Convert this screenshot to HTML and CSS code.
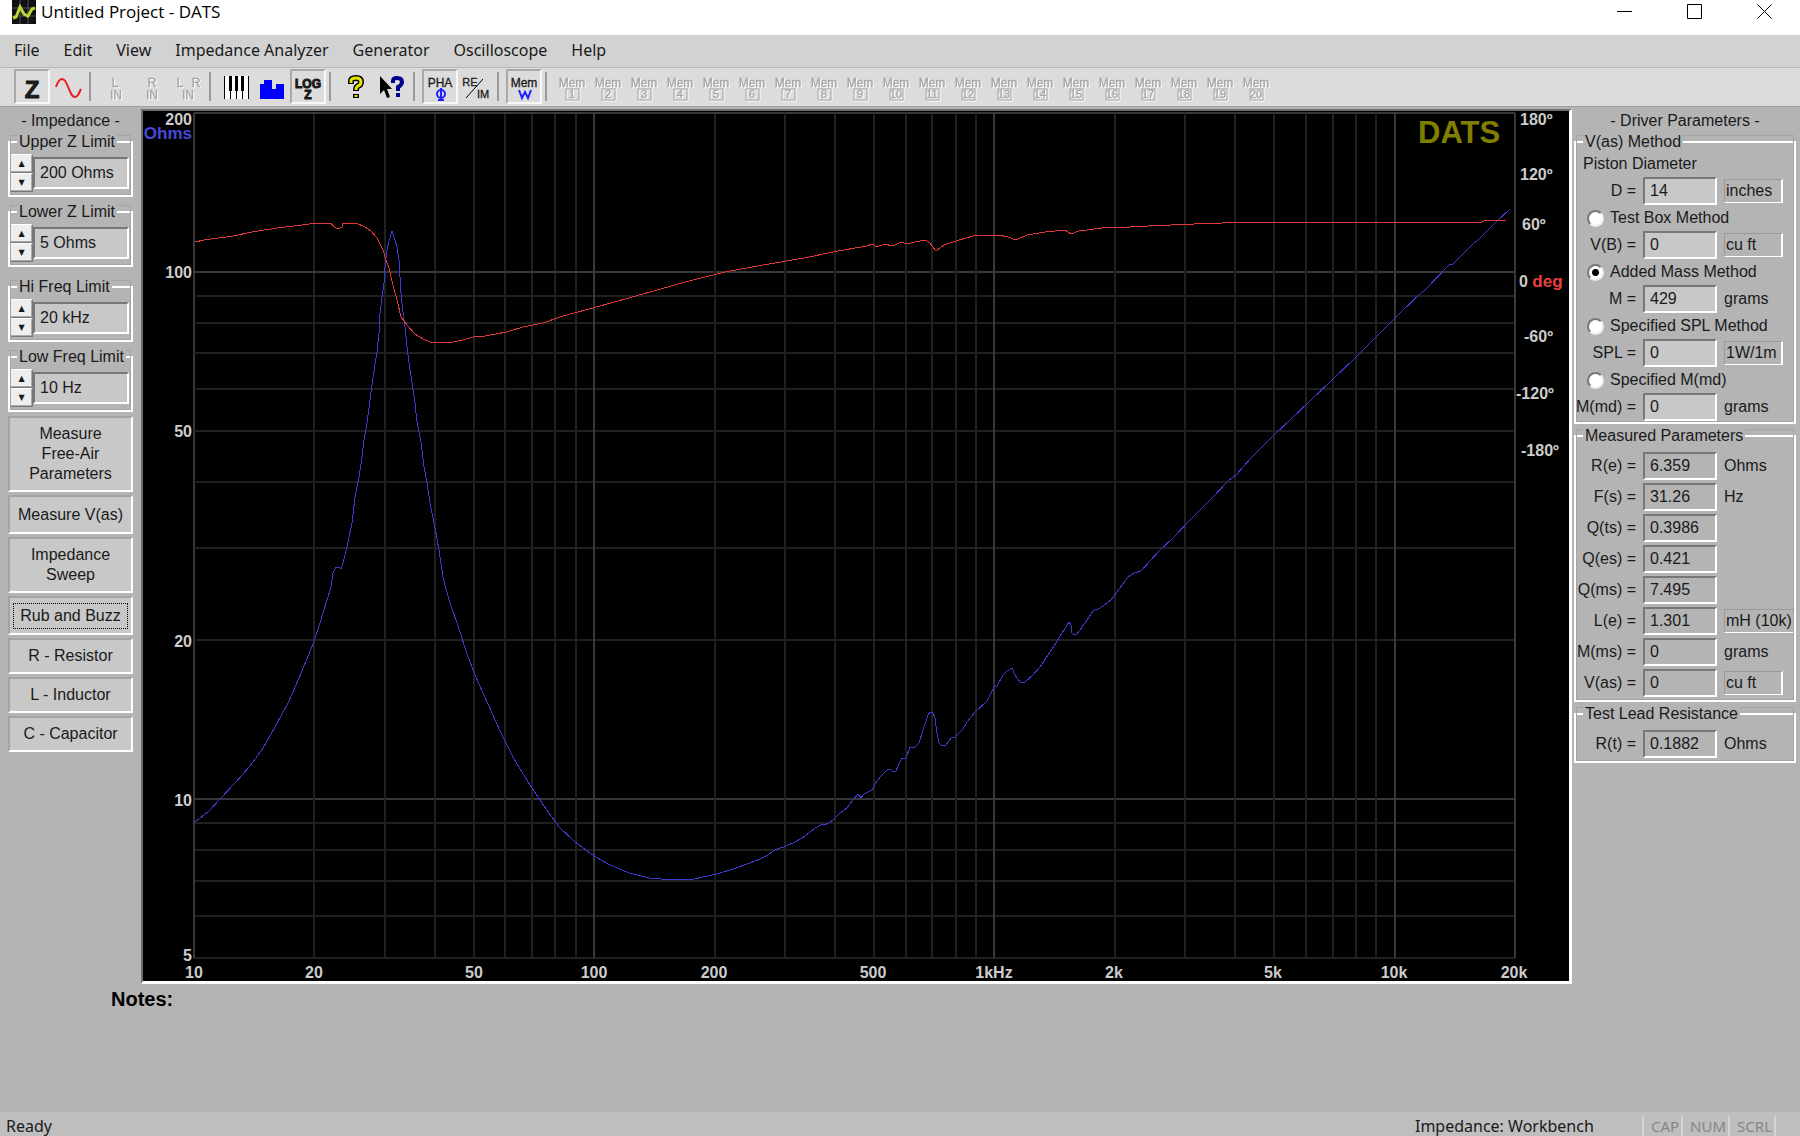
FILE: index.html
```html
<!DOCTYPE html>
<html lang="en">
  <head>
    <meta charset="utf-8" />
    <meta name="viewport" content="width=device-width, initial-scale=1" />
    <title>Untitled Project - DATS</title>
    <link rel="stylesheet" href="styles.css">
  </head>
  <body>
    <header class="titlebar">
      <svg class="app_icon" viewBox="0 0 24 24">
        <rect width="24" height="24" fill="#111" />
        <path d="M0 8H24M0 16H24M8 0V24M16 0V24" stroke="#555" />
        <path d="M1 18L4 17L8 7L12 14L16 16L20 9L23 8" fill="none" stroke="#b9d53a" stroke-width="3" />
      </svg>
      <h1>Untitled Project - DATS</h1>
      <div class="window_buttons">
        <button aria-label="Minimize"><svg viewBox="0 0 16 16"><path d="M0 7.5H15" /></svg></button>
        <button aria-label="Maximize"><svg viewBox="0 0 16 16"><path d="M.5 .5H14.5V14.5H.5Z" /></svg></button>
        <button aria-label="Close"><svg viewBox="0 0 16 16"><path d="M.5 .5L14.5 14.5M14.5 .5L.5 14.5" /></svg></button>
      </div>
    </header>

    <nav class="menubar">
      <button>File</button>
      <button>Edit</button>
      <button>View</button>
      <button>Impedance Analyzer</button>
      <button>Generator</button>
      <button>Oscilloscope</button>
      <button>Help</button>
    </nav>

    <div class="toolbar" id="toolbar">
      <button class="tool pressed" aria-label="Impedance">
        <svg viewBox="0 0 32 32"><text class="icon_z" x="16" y="27">Z</text></svg>
      </button>
      <button class="tool" aria-label="Generator">
        <svg viewBox="0 0 32 32"><path d="M4 16C6 10 8 8 10 8C14 8 15 14 17 18C19 23 20 26 23 26C26 26 27 22 29 18" fill="none" stroke="#e8202a" stroke-width="2" /></svg>
      </button>
      <span class="sep"></span>
      <button class="tool" disabled><svg viewBox="0 0 32 32"><text x="15" y="16">L</text><text x="16" y="28">IN</text></svg></button>
      <button class="tool" disabled><svg viewBox="0 0 32 32"><text x="16" y="16">R</text><text x="16" y="28">IN</text></svg></button>
      <button class="tool" disabled><svg viewBox="0 0 32 32"><text x="8" y="16">L</text><text x="24" y="16">R</text><text x="16" y="28">IN</text></svg></button>
      <span class="sep"></span>
      <button class="tool" aria-label="Keyboard">
        <svg viewBox="0 0 32 32">
          <rect class="keys" x="4" y="5" width="25" height="23" />
          <path d="M4.5 5V28M10.5 18V28M16.5 18V28M22.5 18V28M28.5 5V28" stroke="#000" />
          <path d="M10.5 5V20M16.5 5V20M22.5 5V20" stroke="#000" stroke-width="3" />
        </svg>
      </button>
      <button class="tool" aria-label="Bars">
        <svg viewBox="0 0 32 32"><path d="M4 28V13H8V9H16V18H20V13H28V28Z" fill="#0000ff" /></svg>
      </button>
      <button class="tool pressed" aria-label="Log impedance">
        <svg viewBox="0 0 32 32"><text class="icon_log" x="16" y="17">LOG</text><text class="icon_log" x="16" y="28">Z</text></svg>
      </button>
      <span class="sep"></span>
      <button class="tool" aria-label="Help">
        <svg viewBox="0 0 32 32">
          <path d="M11 13V10Q11 7 16 7Q21 7 21 11Q21 14 18 15Q16 16 16 20M16 23V27" fill="none" stroke="#000" stroke-width="6" />
          <path d="M11 12V10Q11 7 16 7Q21 7 21 11Q21 14 18 15Q16 16 16 19M16 24V26" fill="none" stroke="#e6e600" stroke-width="3" />
        </svg>
      </button>
      <button class="tool" aria-label="Context help">
        <svg viewBox="0 0 32 32">
          <path d="M4 5V23L8 19L11 27L14 26L11 18H16Z" fill="#000" />
          <path d="M17 12V10Q17 7 21 7Q26 7 26 11Q26 14 22 16V20M22 22V26" fill="none" stroke="#00008b" stroke-width="4" />
        </svg>
      </button>
      <span class="sep"></span>
      <button class="tool pressed" aria-label="Phase">
        <svg viewBox="0 0 32 32"><text x="16" y="16">PHA</text><path d="M17 17V30M14 29H20" stroke="#2020ff" stroke-width="2" /><circle cx="17" cy="23" r="4" fill="none" stroke="#2020ff" stroke-width="2" /></svg>
      </button>
      <button class="tool" aria-label="Real and imaginary">
        <svg viewBox="0 0 32 32"><text class="small" x="10" y="15">RE</text><path d="M23 8L6 27" stroke="#000" /><text class="small" x="23" y="27">IM</text></svg>
      </button>
      <span class="sep"></span>
      <button class="tool pressed" aria-label="Workbench memory">
        <svg viewBox="0 0 32 32"><text x="16" y="16">Mem</text><path d="M11 19L14 27L17 21L20 27L23 19" fill="none" stroke="#2020ff" stroke-width="2" /></svg>
      </button>
      <span class="sep"></span>
    </div>

    <main class="workspace">
      <section class="impedance_panel">
        <h2>- Impedance -</h2>
        <div class="limits">
          <fieldset class="group">
            <legend>Upper Z Limit</legend>
            <div class="spinner">
              <div class="arrows"><button aria-label="Up">▲</button><button aria-label="Down">▼</button></div>
              <input type="text" value="200 Ohms" aria-label="Upper Z Limit" />
            </div>
          </fieldset>
          <fieldset class="group">
            <legend>Lower Z Limit</legend>
            <div class="spinner">
              <div class="arrows"><button aria-label="Up">▲</button><button aria-label="Down">▼</button></div>
              <input type="text" value="5 Ohms" aria-label="Lower Z Limit" />
            </div>
          </fieldset>
        </div>
        <div class="limits">
          <fieldset class="group">
            <legend>Hi Freq Limit</legend>
            <div class="spinner">
              <div class="arrows"><button aria-label="Up">▲</button><button aria-label="Down">▼</button></div>
              <input type="text" value="20 kHz" aria-label="Hi Freq Limit" />
            </div>
          </fieldset>
          <fieldset class="group">
            <legend>Low Freq Limit</legend>
            <div class="spinner">
              <div class="arrows"><button aria-label="Up">▲</button><button aria-label="Down">▼</button></div>
              <input type="text" value="10 Hz" aria-label="Low Freq Limit" />
            </div>
          </fieldset>
        </div>
        <div class="actions">
          <button>Measure<br />Free-Air<br />Parameters</button>
          <button class="tall">Measure V(as)</button>
          <button>Impedance<br />Sweep</button>
          <button class="tall"><span class="focused">Rub and Buzz</span></button>
          <button>R - Resistor</button>
          <button>L - Inductor</button>
          <button>C - Capacitor</button>
        </div>
      </section>

      <section class="graph">
        <svg class="plot" viewBox="143 111 1426 870">
          <g id="grid"></g>
          <polyline class="impedance" points="195,822 209,811 220,799 235,783 250,766 263,748 275,727 288,703 296,685 304,666 313,644 320,623 327,600 331,587 333,573 336,567 339,567 341,569 343,563 347,547 352,523 355,497 359,477 362,457 364,440 367,423 370,400 373,377 377,352 379,333 380,313 382,297 384,283 385,267 387,250 389,241 392,231 395,240 397,247 399,260 400,277 401,293 403,312 405,327 407,347 409,363 412,383 415,403 417,422 421,442 424,467 427,483 430,503 435,528 439,550 443,577 449,600 459,629 467,654 475,675 488,704 500,731 514,759 530,785 544,806 559,827 574,841 591,854 608,864 629,873 649,878 672,880 694,879 717,874 733,869 750,863 760,859 768,855 773,851 782,847 784,847 797,841 805,836 815,828 823,824 825,825 833,820 840,813 847,808 853,800 858,794 861,798 864,794 872,790 875,784 880,777 883,774 887,770 890,769 892,771 896,771 898,766 902,758 906,758 910,747 915,747 919,743 923,730 928,715 930,712 933,713 935,718 937,733 939,743 942,746 946,745 951,738 955,737 963,729 967,722 975,712 987,701 994,687 997,686 1003,675 1007,671 1012,668 1015,675 1020,682 1025,682 1033,675 1040,667 1048,655 1056,643 1062,633 1069,622 1071,625 1072,633 1074,635 1077,634 1087,620 1093,611 1100,608 1111,600 1128,577 1134,573 1141,571 1159,551 1174,537 1190,520 1212,498 1228,481 1237,474 1251,458 1274,435 1309,402 1355,358 1400,313 1422,292 1424,291 1450,264 1453,264 1475,242 1477,241 1497,221 1510,209" />
          <polyline class="phase" points="195,242 204,240 233,236 252,232 277,228 302,225 317,223 331,223 334,227 338,229 342,227 343,223 356,223 365,227 371,231 377,238 383,250 386,260 389,268 393,285 397,300 401,317 407,325 415,334 423,339 430,342 453,342 463,340 473,337 485,336 507,332 523,327 543,323 563,316 600,306 643,294 689,281 725,272 769,264 804,258 838,251 867,246 872,244 877,247 884,244 893,246 901,242 907,244 915,242 925,240 930,243 936,251 944,245 959,240 973,236 999,235 1008,237 1016,240 1027,235 1045,232 1065,230 1071,234 1079,231 1102,228 1116,227 1130,227 1148,226 1194,224 1251,222 1482,222 1484,221 1487,220 1506,220" />
          <g class="y_labels">
            <text x="192" y="125">200</text>
            <text class="ohms" x="192" y="139">Ohms</text>
            <text x="192" y="278">100</text>
            <text x="192" y="437">50</text>
            <text x="192" y="647">20</text>
            <text x="192" y="806">10</text>
            <text x="192" y="961">5</text>
          </g>
          <g class="x_labels">
            <text x="194" y="978">10</text>
            <text x="314" y="978">20</text>
            <text x="474" y="978">50</text>
            <text x="594" y="978">100</text>
            <text x="714" y="978">200</text>
            <text x="873" y="978">500</text>
            <text x="994" y="978">1kHz</text>
            <text x="1114" y="978">2k</text>
            <text x="1273" y="978">5k</text>
            <text x="1394" y="978">10k</text>
            <text x="1514" y="978">20k</text>
          </g>
          <g class="phase_labels">
            <text x="1520" y="125">180º</text>
            <text x="1520" y="180">120º</text>
            <text x="1522" y="230">60º</text>
            <text x="1519" y="287">0 <tspan class="deg">deg</tspan></text>
            <text x="1524" y="342">-60º</text>
            <text x="1516" y="399">-120º</text>
            <text x="1521" y="456">-180º</text>
          </g>
          <text class="brand" x="1418" y="143">DATS</text>
        </svg>
      </section>

      <section class="driver_panel">
        <h2>- Driver Parameters -</h2>
        <fieldset class="group method">
          <legend>V(as) Method</legend>
          <p>Piston Diameter</p>
          <div class="param"><label for="d">D =</label><input id="d" type="text" value="14" /><button>inches</button></div>
          <label class="choice"><input type="radio" name="method" />Test Box Method</label>
          <div class="param"><label for="vb">V(B) =</label><input id="vb" type="text" value="0" /><button>cu ft</button></div>
          <label class="choice"><input type="radio" name="method" checked />Added Mass Method</label>
          <div class="param"><label for="m">M =</label><input id="m" type="text" value="429" /><span>grams</span></div>
          <label class="choice"><input type="radio" name="method" />Specified SPL Method</label>
          <div class="param"><label for="spl">SPL =</label><input id="spl" type="text" value="0" /><button>1W/1m</button></div>
          <label class="choice"><input type="radio" name="method" />Specified M(md)</label>
          <div class="param"><label for="mmd">M(md) =</label><input id="mmd" type="text" value="0" /><span>grams</span></div>
        </fieldset>
        <fieldset class="group measured">
          <legend>Measured Parameters</legend>
          <div class="param"><label for="re">R(e) =</label><input id="re" type="text" value="6.359" readonly /><span>Ohms</span></div>
          <div class="param"><label for="fs">F(s) =</label><input id="fs" type="text" value="31.26" readonly /><span>Hz</span></div>
          <div class="param"><label for="qts">Q(ts) =</label><input id="qts" type="text" value="0.3986" readonly /></div>
          <div class="param"><label for="qes">Q(es) =</label><input id="qes" type="text" value="0.421" readonly /></div>
          <div class="param"><label for="qms">Q(ms) =</label><input id="qms" type="text" value="7.495" readonly /></div>
          <div class="param"><label for="le">L(e) =</label><input id="le" type="text" value="1.301" readonly /><button>mH (10k)</button></div>
          <div class="param"><label for="mms">M(ms) =</label><input id="mms" type="text" value="0" readonly /><span>grams</span></div>
          <div class="param"><label for="vas">V(as) =</label><input id="vas" type="text" value="0" readonly /><button>cu ft</button></div>
        </fieldset>
        <fieldset class="group measured">
          <legend>Test Lead Resistance</legend>
          <div class="param"><label for="rt">R(t) =</label><input id="rt" type="text" value="0.1882" readonly /><span>Ohms</span></div>
        </fieldset>
      </section>
    </main>

    <div class="notes">
      <label for="notes">Notes:</label>
      <textarea id="notes"></textarea>
    </div>

    <footer class="statusbar">
      <span class="ready">Ready</span>
      <span class="mode">Impedance: Workbench</span>
      <span class="key">CAP</span>
      <span class="key">NUM</span>
      <span class="key">SCRL</span>
    </footer>

    <script>
      var toolbar = document.getElementById("toolbar");
      for (var n = 1; n <= 20; n++) {
        var button = document.createElement("button");
        button.className = "tool";
        button.disabled = true;
        button.innerHTML =
          '<svg viewBox="0 0 32 32"><text x="16" y="16">Mem</text>' +
          '<rect x="10" y="18" width="13" height="11" />' +
          '<text class="number" x="16" y="27">' + n + "</text></svg>";
        toolbar.appendChild(button);
      }

      // log-log grid, 10 Hz - 20 kHz by 5 - 200 ohms
      var left = 194, right = 1515, top_ = 113, bottom = 958;
      var grid = document.getElementById("grid");

      function line(x1, y1, x2, y2, major) {
        var el = document.createElementNS("http://www.w3.org/2000/svg", "line");
        el.setAttribute("x1", x1);
        el.setAttribute("y1", y1);
        el.setAttribute("x2", x2);
        el.setAttribute("y2", y2);
        if (major) el.setAttribute("class", "major");
        grid.appendChild(el);
      }

      for (var decade = 1; decade <= 10000; decade *= 10) {
        for (var i = 1; i < 10; i++) {
          var value = decade * i;
          if (value >= 10 && value <= 20000) {
            var x = Math.round(left + (Math.log10(value / 10) / Math.log10(2000)) * (right - left));
            line(x, top_, x, bottom, i == 1 || value == 20000);
          }
          if (value >= 5 && value <= 200) {
            var y = Math.round(bottom - (Math.log10(value / 5) / Math.log10(40)) * (bottom - top_));
            line(left, y, right, y, i == 1 || value == 200);
          }
        }
      }
    </script>
  </body>
</html>
```
FILE: styles.css
```css
* {
  box-sizing: border-box;
}

body {
  margin: 0;
  min-height: 100vh;
  display: flex;
  flex-direction: column;
  background-color: #b4b4b4;
  color: #1a1a1a;
  font-family: "Liberation Sans", Arial, sans-serif;
  font-size: 16px;
  line-height: 20px;
}

button,
input,
textarea {
  font: inherit;
  color: inherit;
  margin: 0;
}

button {
  background: none;
  border: none;
  padding: 0;
}

h1,
h2,
p {
  margin: 0;
  font-size: 16px;
  font-weight: normal;
}

/* title bar */

.titlebar {
  display: flex;
  align-items: flex-start;
  height: 35px;
  padding-left: 12px;
  background-color: white;
}

.app_icon {
  width: 24px;
  height: 24px;
}

.titlebar h1 {
  flex: 1;
  padding-left: 5px;
  line-height: 24px;
  font-family: "Open Sans", sans-serif;
  font-size: 17px;
  color: black;
}

.window_buttons {
  display: flex;
}

.window_buttons button {
  width: 70px;
  height: 24px;
}

.window_buttons svg {
  display: block;
  width: 16px;
  height: 16px;
  margin: 0 auto;
  fill: none;
  stroke: black;
}

/* menu and toolbar */

.menubar {
  display: flex;
  gap: 24px;
  height: 33px;
  padding: 0 0 2px 14px;
  background-color: #d2d2d2;
  border-bottom: 1px solid #b8b8b8;
  font-family: "Noto Sans", sans-serif;
}

.toolbar {
  display: flex;
  align-items: center;
  height: 38px;
  padding: 0 0 2px 14px;
  background-color: #dcdcdc;
}

.tool {
  width: 36px;
  height: 35px;
  border: 2px solid transparent;
}

.tool.pressed {
  border-color: #aaa #f8f8f8 #f8f8f8 #aaa;
}

.tool svg {
  display: block;
  width: 32px;
  height: 32px;
}

.tool text {
  font-size: 12px;
  text-anchor: middle;
  fill: currentColor;
  stroke: currentColor;
  stroke-width: 0.3px;
}

.tool .icon_z {
  font-size: 24px;
  font-weight: bold;
  stroke-width: 1px;
}

.tool .icon_log {
  font-size: 12px;
  font-weight: bold;
  stroke-width: 1px;
}

.tool .small {
  font-size: 11px;
}

.tool .number {
  font-size: 11px;
}

.tool rect {
  stroke: currentColor;
  fill: none;
}

.tool .keys {
  stroke: none;
  fill: white;
}

.tool:disabled {
  color: #a4a4a4;
  filter: drop-shadow(1px 1px 0 white);
}

.sep {
  width: 12px;
  height: 29px;
  background: linear-gradient(#999, #999) 3px 0 / 2px 100% no-repeat;
}

/* workspace */

.workspace {
  display: grid;
  grid-template-columns: 141px 1fr 228px;
  align-items: start;
  padding-top: 2px;
  border-top: 1px solid #a0a0a0;
}

.workspace h2 {
  line-height: 24px;
  text-align: center;
}

.group {
  min-width: 0;
  margin: 0;
  padding: 0;
  border: 2px solid white;
  outline: 1px solid #a4a4a4;
  outline-offset: -3px;
}

.group legend {
  margin-left: 7px;
  padding: 0 2px;
  line-height: 18px;
  position: relative;
  z-index: 1;
  background-color: #b4b4b4;
}

.impedance_panel {
  padding: 0 8px;
}

.limits {
  display: flex;
  flex-direction: column;
  gap: 6px;
  margin-bottom: 11px;
}

.spinner {
  display: flex;
  align-items: center;
  padding: 3px 2px 3px 0;
}

.arrows {
  display: flex;
  flex-direction: column;
  width: 23px;
}

.arrows button {
  height: 19px;
  background-color: #eee;
  border: 1px solid;
  border-color: white #777 #777 white;
  box-shadow: inset -1px -1px #aaa;
  font-family: "DejaVu Sans", sans-serif;
  font-size: 8px;
  line-height: 16px;
}

input[type="text"] {
  min-width: 0;
  height: 28px;
  padding: 0 5px;
  background-color: #c8c8c8;
  border: 2px solid;
  border-color: #777 white white #777;
}

.spinner input {
  flex: 1;
  height: 32px;
}

.actions {
  display: flex;
  flex-direction: column;
  gap: 3px;
}

.limits + .actions {
  margin-top: -7px;
}

.actions button {
  padding: 6px 0;
  background-color: #c8c8c8;
  border: 2px solid;
  border-color: #a4a4a4 white white #a4a4a4;
}

.actions .tall {
  min-height: 39px;
}

.focused {
  display: block;
  margin: -2px 4px;
  padding: 2px 0;
  outline: 1px dotted black;
}

/* graph */

.graph {
  border: 2px solid #6e6e6e;
  border-right: 3px solid white;
  border-bottom: 3px solid white;
  background-color: black;
}

.plot {
  display: block;
  width: 100%;
}

.plot line,
.plot polyline {
  fill: none;
  shape-rendering: crispEdges;
}

.plot line {
  stroke: #202020;
  stroke-width: 2px;
}

.plot .major {
  stroke: #383838;
}

.plot .impedance {
  stroke: #3c3ccc;
}

.plot .phase {
  stroke: #e03838;
}

.plot text {
  fill: #ccc;
  font-size: 16px;
  font-weight: bold;
}

.y_labels {
  text-anchor: end;
}

.x_labels {
  text-anchor: middle;
}

.plot .ohms {
  fill: #4848d8;
  font-size: 17px;
}

.plot .deg {
  fill: #e84040;
  font-size: 17px;
}

.plot .brand {
  fill: #808000;
  font-size: 31px;
}

/* driver panel */

.driver_panel {
  padding: 0 4px 0 2px;
}

.method {
  padding-bottom: 1px;
}

.method p {
  padding-left: 7px;
  line-height: 26px;
}

.param {
  display: grid;
  grid-template-columns: 60px 74px 1fr;
  column-gap: 7px;
  align-items: center;
  height: 28px;
}

.param label {
  justify-self: end;
  white-space: nowrap;
}

.param button {
  justify-self: start;
  min-width: 59px;
  height: 24px;
  padding: 0 1px;
  text-align: left;
  white-space: nowrap;
  border: 1px solid;
  border-color: #999 white white #999;
  border-right-width: 2px;
}

.choice {
  display: flex;
  align-items: center;
  gap: 6px;
  height: 26px;
  padding-left: 11px;
}

.choice input {
  appearance: none;
  width: 17px;
  height: 17px;
  margin: 0;
  border: 2px solid;
  border-color: #777 #eee #eee #777;
  border-radius: 50%;
  background-color: white;
}

.choice input:checked {
  background-image: radial-gradient(circle, black 3px, white 4px);
}

.measured {
  margin-top: 3px;
  padding: 7px 0 3px;
}

.measured .param + .param {
  margin-top: 3px;
}

.measured input[type="text"] {
  background-color: #b4b4b4;
}

/* notes and status bar */

.notes {
  flex: 1;
  display: flex;
  align-items: flex-start;
  gap: 8px;
  padding: 3px 8px 0 111px;
}

.notes label {
  font-size: 20px;
  font-weight: bold;
  line-height: 24px;
  color: black;
}

.notes textarea {
  flex: 1;
  height: 100px;
  background: none;
  border: none;
  outline: none;
  resize: none;
}

.statusbar {
  display: flex;
  height: 24px;
  padding: 4px 24px 0 6px;
  background-color: #bebebe;
  font-family: "Noto Sans", sans-serif;
  line-height: 20px;
}

.ready {
  flex: 1;
}

.mode {
  width: 227px;
}

.key {
  padding: 0 2px 0 7px;
  border-left: 2px solid #d4d4d4;
  font-size: 15px;
  color: #868686;
}

.key:last-child {
  border-right: 2px solid #d4d4d4;
}
```
